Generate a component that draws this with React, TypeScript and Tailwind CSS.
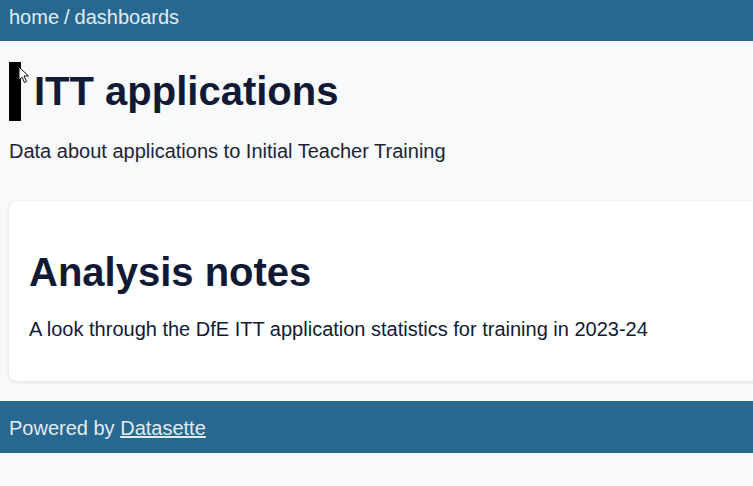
export default function App() {
  return (
    <div className="min-h-[486px] w-full overflow-x-hidden bg-[#f8f9fb] font-['Liberation_Sans',Arial,sans-serif]">
      {/* breadcrumb bar */}
      <nav className="flex h-[41px] items-center bg-[#276890] px-[9px] pb-[8px] text-[20px] text-[#e3ebf1]">
        <a href="#">home</a>
        <span className="px-[5px]">/</span>
        <a href="#">dashboards</a>
      </nav>

      <main className="px-[9px]">
        <h1 className="relative mt-[20px] flex h-[60px] items-center text-[40px] font-bold leading-[60px] text-[#111a35]">
          <span className="mr-[13px] inline-block h-[59px] w-[12px] bg-black" />
          <span>ITT applications</span>
          {/* mouse pointer */}
          <svg className="absolute left-[9px] top-[5px]" width="12" height="18" viewBox="0 0 12 18" aria-hidden>
            <path d="M1 1v13l3-3 2.5 5.5 2-1L6 10h4.5z" fill="white" stroke="#111" strokeWidth="1" strokeLinejoin="round" />
          </svg>
        </h1>
        <p className="mt-[15px] text-[20px] leading-[30px] text-[#1d2433]">
          Data about applications to Initial Teacher Training
        </p>

        <section className="mt-[35px] h-[180px] w-[780px] rounded-[8px] bg-white px-[20px] pt-[47px] shadow-[0_1px_4px_rgba(0,0,0,0.12)]">
          <h2 className="text-[40px] font-bold leading-[48px] text-[#111a35]">Analysis notes</h2>
          <p className="mt-[18px] text-[20px] leading-[30px] text-[#111a35]">
            A look through the DfE ITT application statistics for training in 2023-24
          </p>
        </section>
      </main>

      <footer className="mt-[20px] flex h-[52px] items-center bg-[#276890] px-[9px] pt-[2px] text-[20px] text-[#e3ebf1]">
        <span>
          Powered by{" "}
          <a href="#" className="underline">
            Datasette
          </a>
        </span>
      </footer>
    </div>
  );
}
